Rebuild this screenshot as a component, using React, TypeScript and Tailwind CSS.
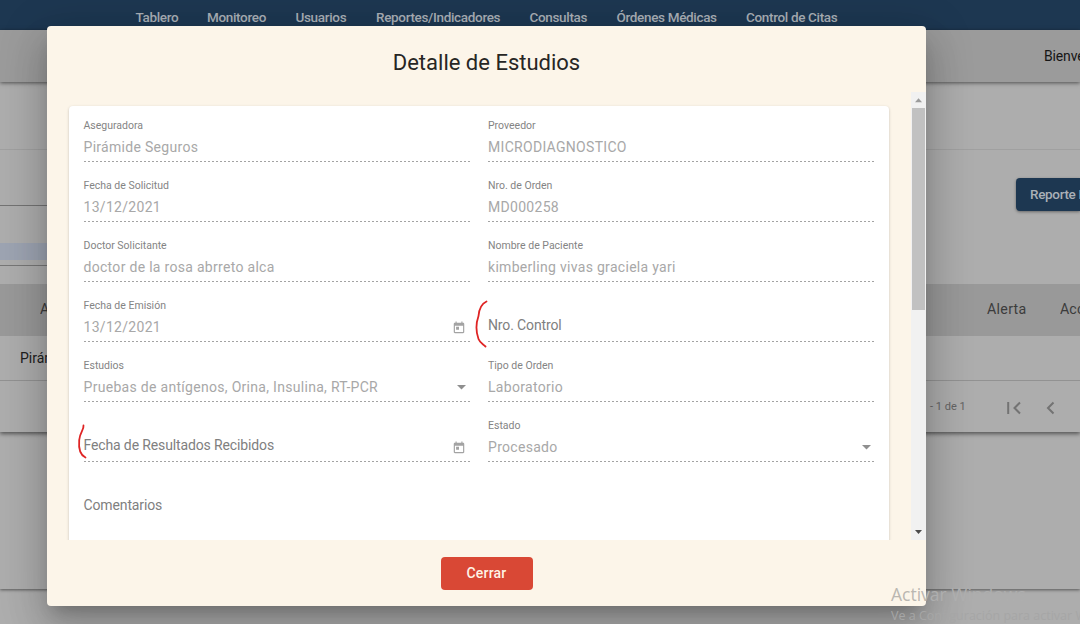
import React from 'react';

type Icon = 'calendar' | 'arrow';
type FieldData = { label: string; value?: string; icon?: Icon };

const menu = [
  ['Tablero', 'w-[71.5px]'],
  ['Monitoreo', 'w-[88.5px]'],
  ['Usuarios', 'w-[80.5px]'],
  ['Reportes/Indicadores', 'w-[153.5px]'],
  ['Consultas', 'w-[87px]'],
  ['Órdenes Médicas', 'w-[129.5px]'],
  ['Control de Citas', 'w-[100px]'],
];

const fields: FieldData[] = [
  { label: 'Aseguradora', value: 'Pirámide Seguros' },
  { label: 'Proveedor', value: 'MICRODIAGNOSTICO' },
  { label: 'Fecha de Solicitud', value: '13/12/2021' },
  { label: 'Nro. de Orden', value: 'MD000258' },
  { label: 'Doctor Solicitante', value: 'doctor de la rosa abrreto alca' },
  { label: 'Nombre de Paciente', value: 'kimberling vivas graciela yari' },
  { label: 'Fecha de Emisión', value: '13/12/2021', icon: 'calendar' },
  { label: 'Nro. Control' },
  { label: 'Estudios', value: 'Pruebas de antígenos, Orina, Insulina, RT-PCR', icon: 'arrow' },
  { label: 'Tipo de Orden', value: 'Laboratorio' },
  { label: 'Fecha de Resultados Recibidos', icon: 'calendar' },
  { label: 'Estado', value: 'Procesado', icon: 'arrow' },
];

function Field({ label, value, icon }: FieldData) {
  return (
    <div className="flex h-[60px] flex-col">
      <div className="flex h-[14px] items-center text-[10.5px] leading-[14px] text-[#848484]">{value ? label : ''}</div>
      <div className="flex h-[28px] items-center justify-between">
        {value ? (
          <span className="-mt-px text-[14px] leading-[20px] tracking-[0.3px] text-[#a8a8a8]">{value}</span>
        ) : (
          <span className="-mt-[5px] text-[14px] leading-[20px] tracking-[-0.13px] text-[#808080]">{label}</span>
        )}
        {icon === 'calendar' && (
          <svg className="mr-[5px] mt-px size-[14px]" viewBox="0 0 24 24" fill="#a3a3a3">
            <path d="M19 3h-1V1h-2v2H8V1H6v2H5c-1.110 0-1.990.9-1.990 2L3 19c0 1.100.890 2 2 2h14c1.100 0 2-.9 2-2V5c0-1.100-.9-2-2-2zm0 16H5V8h14v11zM7 10h5v5H7z" />
          </svg>
        )}
        {icon === 'arrow' && (
          <svg className="mr-[4.500px] h-[5px] w-[9px]" viewBox="0 0 9 5" fill="#8f8f8f">
            <path d="M0 0h9L4.500 4.500z" />
          </svg>
        )}
      </div>
      <div className="h-px bg-[linear-gradient(to_right,#a3a3a3_0,#a3a3a3_50%,transparent_50%)] bg-[length:4px_1px]" />
    </div>
  );
}

export default function App() {
  return (
    <div className="relative h-[624px] w-[1080px] overflow-hidden bg-[#adadad] font-['Roboto',sans-serif]">
      <div className="isolate flex h-full flex-col">
        <header className="flex h-[30px] shrink-0 bg-[#1d3751] pl-[135.5px] pt-[7px] text-[13.5px] font-medium leading-[20px] tracking-[-0.33px] text-[#a9afb6]">
          {menu.map(([name, width]) => (
            <span key={name} className={`${width} shrink-0 whitespace-nowrap`}>{name}</span>
          ))}
        </header>
        <div className="z-[1] flex h-[52px] shrink-0 items-center justify-end bg-[#9b9b9b] text-[14px] text-[#161616] shadow-[0_1px_4px_rgba(0,0,0,0.55)]">
          <span className="w-[36px] overflow-hidden tracking-[-0.15px]">Bienvenido</span>
        </div>
        <main className="flex h-[507px] shrink-0 flex-col shadow-[0_1px_3px_rgba(0,0,0,0.5)]">
          <div className="flex h-[350px] flex-col shadow-[0_2px_4px_rgba(0,0,0,0.5)]">
            <div className="h-[68px] shrink-0 border-b border-[#a0a0a0]" />
            <div className="flex h-[134px] shrink-0 justify-between">
              <div className="flex w-[60px] flex-col">
                <div className="h-[56px] border-b border-[#737373]" />
                <div className="mt-[37px] h-[17px] bg-[#9da4b2]" />
                <div className="h-[6px] border-b border-[#777]" />
              </div>
              <div className="mt-[28px] flex h-[33px] w-[64.500px] items-center overflow-hidden whitespace-nowrap rounded-l-[4px] bg-[#1d3751] pl-[14.500px] text-[13.5px] font-medium tracking-[-0.33px] text-[#aab0b7] shadow-[0_1px_3px_rgba(0,0,0,0.4)]">
                Reporte Excel
              </div>
            </div>
            <div className="flex h-[52px] shrink-0 items-center bg-[#999] text-[14.200px] text-[#3c3c3c]">
              <span className="w-[40px]" />
              <span className="w-[7px] overflow-hidden">Aseguradora</span>
              <span className="ml-[940px] w-[73px] tracking-[0.3px]">Alerta</span>
              <span className="w-[20px] overflow-hidden tracking-[0.1px]">Acciones</span>
            </div>
            <div className="flex h-[45px] shrink-0 items-center border-b border-[#929292] pl-[20px] text-[14px] text-[#202020]">
              <span className="w-[27px] overflow-hidden whitespace-nowrap">Pirámide Seguros</span>
            </div>
            <div className="flex h-[51px] items-center pl-[930px] text-[#646464]">
              <span className="mt-[2px] w-[77px] whitespace-nowrap text-[11px]">- 1 de 1</span>
              <svg className="mt-[2px] h-[14px] w-[14px]" viewBox="0 0 14 14" fill="none" stroke="#737373" strokeWidth="2">
                <path d="M1.200 1v12M13 1.500 7.500 7l5.500 5.500" />
              </svg>
              <svg className="ml-[24.500px] mt-[2px] h-[14px] w-[9px]" viewBox="0 0 9 14" fill="none" stroke="#737373" strokeWidth="2">
                <path d="M7.500 1.500 2 7l5.500 5.500" />
              </svg>
            </div>
          </div>
        </main>
      </div>

      <section className="absolute left-[47px] top-[26px] flex h-[580px] w-[879px] flex-col rounded-[4px] bg-[#fcf5e9] shadow-[0_11px_15px_-7px_rgba(0,0,0,0.2),0_24px_38px_3px_rgba(0,0,0,0.14),0_9px_46px_8px_rgba(0,0,0,0.12)]">
        <h1 className="h-[66px] shrink-0 pt-[21px] text-center text-[22px] leading-[32px] text-[#272624]">Detalle de Estudios</h1>
        <div className="flex h-[448px] shrink-0 overflow-hidden">
          <div className="flex-1 overflow-hidden pl-[21.500px] pt-[14px]">
            <div className="h-[500px] w-[820.500px] rounded-[4px] bg-white pl-[15px] pt-[13px] shadow-[0_1px_3px_rgba(0,0,0,0.22)]">
              <div className="grid grid-cols-[387px_387px] gap-x-[17.500px]">
                {fields.map((field) => <Field key={field.label} {...field} />)}
              </div>
              <div className="pt-[16px] text-[14px] leading-[20px] tracking-[-0.13px] text-[#808080]">Comentarios</div>
            </div>
          </div>
          <div className="flex w-[15.500px] shrink-0 flex-col items-center bg-[#f1f1f1]">
            <svg className="h-[15.500px] w-[15px] shrink-0" viewBox="0 0 15 15" fill="#9b9b9b"><path d="M4 10h7L7.500 6z" /></svg>
            <div className="h-[202px] w-[13px] shrink-0 bg-[#c1c1c1]" />
            <svg className="mt-auto h-[15px] w-[15px] shrink-0" viewBox="0 0 15 15" fill="#4b4b4b"><path d="M4 5h7L7.500 9z" /></svg>
          </div>
        </div>
        <div className="flex flex-1 justify-center pt-[17px]">
          <button className="mt-[-0.500px] h-[33px] w-[92px] rounded-[4px] bg-[#d94835] text-[14px] font-medium tracking-[0.2px] text-[#fff4e6]">Cerrar</button>
        </div>
      </section>

      <svg className="absolute left-[474px] top-[299px] h-[50px] w-[16px]" viewBox="0 0 16 50" fill="none" stroke="#df2424" strokeWidth="1.800" strokeLinecap="round">
        <path d="M12.500 2.500C7 5 5 11 4.500 17C2 24 2 33 4.500 40C6 44 9 45 11.500 47.500" />
      </svg>
      <svg className="absolute left-[76px] top-[423px] h-[38px] w-[14px]" viewBox="0 0 14 38" fill="none" stroke="#df2424" strokeWidth="1.800" strokeLinecap="round">
        <path d="M7.500 2.500C8 7 4 9 3.200 17C2.500 25 4 32 9.500 34.500" />
      </svg>

      <div className="absolute left-[891px] top-[581.5px] whitespace-nowrap font-['Open_Sans',sans-serif] text-[#aeaeae]">
        <div className="text-[17.500px] leading-[25px]"><span className="text-[#bab7b1]">Activ</span>ar Windows</div>
        <div className="text-[12.500px] leading-[18px] text-[#a6a6a6]">Ve a Configuración para activar Windows.</div>
      </div>
    </div>
  );
}
